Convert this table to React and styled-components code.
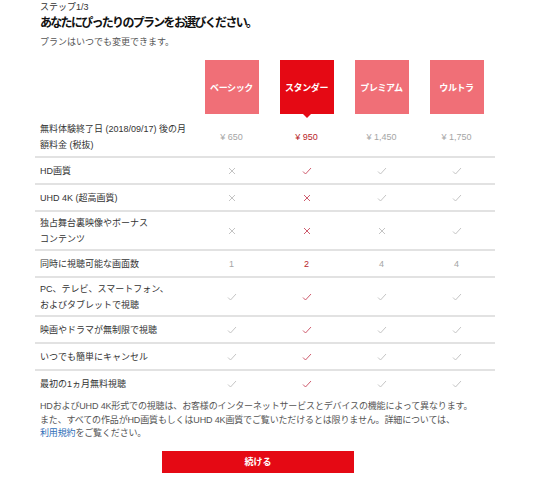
import styled, { createGlobalStyle } from 'styled-components';

const GlobalStyle = createGlobalStyle`
  body {
    margin: 0;
    background: #fff;
    font-family: "Liberation Sans", "Noto Sans CJK JP", sans-serif;
    color: #333;
  }
`;

const plans = [
  { name: 'ベーシック', price: '¥ 650', screens: '1' },
  { name: 'スタンダー', price: '¥ 950', screens: '2', selected: true },
  { name: 'プレミアム', price: '¥ 1,450', screens: '4' },
  { name: 'ウルトラ', price: '¥ 1,750', screens: '4' },
];

// each feature row: label, tall (two lines), values per plan
const rows = [
  { label: <>無料体験終了日 (2018/09/17) 後の月<br />額料金 (税抜)</>, kind: 'price', h: 38 },
  { label: 'HD画質', values: [0, 1, 1, 1] },
  { label: 'UHD 4K (超高画質)', values: [0, 0, 1, 1] },
  { label: <>独占舞台裏映像やボーナス<br />コンテンツ</>, values: [0, 0, 0, 1], h: 37 },
  { label: '同時に視聴可能な画面数', kind: 'screens' },
  { label: <>PC、テレビ、スマートフォン、<br />およびタブレットで視聴</>, values: [1, 1, 1, 1], h: 37 },
  { label: '映画やドラマが無制限で視聴', values: [1, 1, 1, 1] },
  { label: 'いつでも簡単にキャンセル', values: [1, 1, 1, 1] },
  { label: '最初の1ヵ月無料視聴', values: [1, 1, 1, 1], last: true },
];

const Page = styled.div`
  width: 460px;
  margin-left: 35px;
`;

const Intro = styled.div`
  padding-left: 5px;
`;

const Step = styled.div`
  font-size: 9px;
  line-height: 12px;
  padding-top: 1px;
  color: #333;
`;

const Title = styled.h1`
  margin: 2px 0 0;
  font-size: 12px;
  line-height: 16px;
  letter-spacing: -1.7px;
  font-weight: bold;
  color: #111;
`;

const Sub = styled.p`
  margin: 5px 0 0;
  font-size: 9px;
  line-height: 12px;
  color: #555;
`;

const Grid = styled.div`
  display: grid;
  grid-template-columns: 159px repeat(4, 75px);
`;

const HeaderRow = styled(Grid)`
  margin-top: 12px;
  height: 58px;
`;

const PlanCell = styled.div`
  display: flex;
  justify-content: center;
`;

const PlanBox = styled.div`
  position: relative;
  width: 54px;
  height: 54px;
  display: flex;
  align-items: center;
  justify-content: center;
  background: ${p => (p.$selected ? '#e50914' : '#f06f77')};
  color: #fff;
  font-size: 9px;
  font-weight: bold;
  letter-spacing: -0.4px;

  &::after {
    content: '';
    display: ${p => (p.$selected ? 'block' : 'none')};
    position: absolute;
    left: 50%;
    bottom: -4px;
    margin-left: -4px;
    border-left: 4px solid transparent;
    border-right: 4px solid transparent;
    border-top: 4px solid #e50914;
  }
`;

const Row = styled(Grid)`
  min-height: ${p => p.$h}px;
  border-bottom: ${p => (p.$last ? 'none' : '2px solid #e2e2e2')};
  align-items: center;
`;

const Label = styled.div`
  padding-left: 5px;
  font-size: 9px;
  line-height: 16px;
  color: #333;
`;

const Value = styled.div`
  display: flex;
  justify-content: center;
  align-items: center;
  font-size: 9px;
  color: ${p => (p.$selected ? '#b81d2a' : '#a5a5a5')};
`;

const Note = styled.p`
  margin: 4px 0 0;
  padding-left: 5px;
  font-size: 9px;
  line-height: 13.5px;
  letter-spacing: -0.15px;
  color: #555;
  white-space: nowrap;
`;

const Link = styled.a`
  color: #2f6fb8;
  text-decoration: none;
`;

const Button = styled.button`
  display: block;
  margin: 10px 0 0 127px;
  width: 192px;
  height: 22px;
  border: none;
  background: #e50914;
  color: #fff;
  font-family: inherit;
  font-size: 9px;
  font-weight: bold;
  cursor: pointer;
`;

function Check({ color }) {
  return (
    <svg width="10" height="8" viewBox="0 0 10 8">
      <polyline points="1,4.5 3.5,7 9,1" fill="none" stroke={color} strokeWidth="0.9" />
    </svg>
  );
}

function Cross({ color }) {
  return (
    <svg width="8" height="8" viewBox="0 0 8 8">
      <path d="M1 1 L7 7 M7 1 L1 7" fill="none" stroke={color} strokeWidth="0.9" />
    </svg>
  );
}

export default function App() {
  return (
    <Page>
      <GlobalStyle />
      <Intro>
        <Step>ステップ1/3</Step>
        <Title>あなたにぴったりのプランをお選びください。</Title>
        <Sub>プランはいつでも変更できます。</Sub>
      </Intro>

      <HeaderRow>
        <div />
        {plans.map(p => (
          <PlanCell key={p.name}>
            <PlanBox $selected={p.selected}>{p.name}</PlanBox>
          </PlanCell>
        ))}
      </HeaderRow>

      {rows.map((r, i) => (
        <Row key={i} $h={r.h || 25} $last={r.last}>
          <Label>{r.label}</Label>
          {plans.map((p, j) => {
            const sel = p.selected;
            const iconColor = sel ? '#c84a5e' : '#bdbdbd';
            let content;
            if (r.kind === 'price') content = p.price;
            else if (r.kind === 'screens') content = p.screens;
            else content = r.values[j] ? <Check color={iconColor} /> : <Cross color={iconColor} />;
            return (
              <Value key={p.name} $selected={sel}>{content}</Value>
            );
          })}
        </Row>
      ))}

      <Note>
        HDおよびUHD 4K形式での視聴は、お客様のインターネットサービスとデバイスの機能によって異なります。<br />
        また、すべての作品がHD画質もしくはUHD 4K画質でご覧いただけるとは限りません。詳細については、<br />
        <Link href="#">利用規約</Link>をご覧ください。
      </Note>

      <Button>続ける</Button>
    </Page>
  );
}
